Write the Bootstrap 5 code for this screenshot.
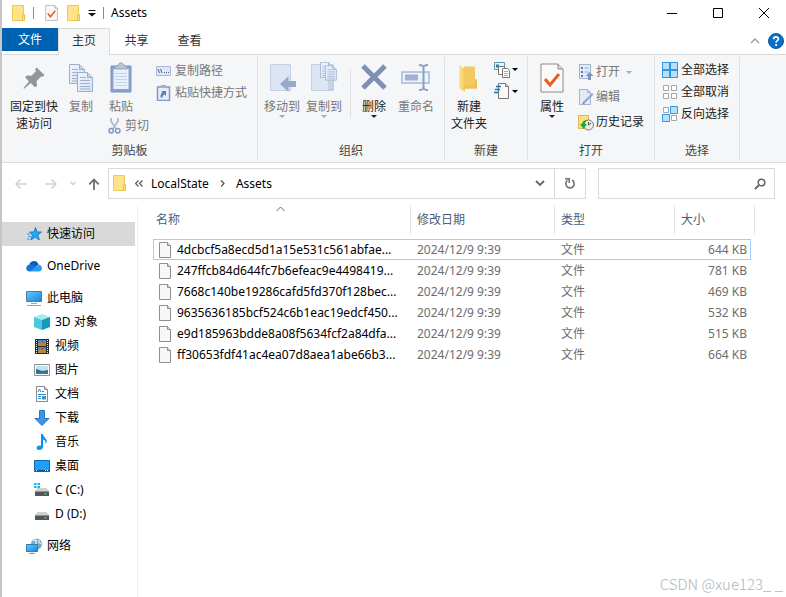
<!DOCTYPE html>
<html lang="zh-CN">
<head>
<meta charset="utf-8">
<meta name="viewport" content="width=device-width, initial-scale=1">
<title>Assets</title>
<link href="https://cdn.jsdelivr.net/npm/bootstrap@5.3.0/dist/css/bootstrap.min.css" rel="stylesheet">
<style>
  body { font: 12px/16px "Noto Sans", "Noto Sans CJK SC", sans-serif; color: #000; background: #fff; }
  svg { display: block; flex: none; }
  button { font: inherit; color: inherit; background: none; border: 0; padding: 0; }
  .window { border-left: 2px solid #c6c6c6; overflow: hidden; }
  .titlebar { height: 28px; padding-left: 10px; }
  .quick { height: 26px; gap: 7px; }
  .quick .after-split { margin-left: 4px; margin-right: 2px; }
  .quick h1 { font-size: 12px; }
  .titlebar .split { width: 1px; height: 12px; background: #8c8c8c; }
  .sys-btn { width: 46px; height: 26px; display: grid; place-items: center; }
  .tab-row { height: 27px; border-bottom: 1px solid #dadbdc; }
  .tab-row a { width: 53px; height: 27px; line-height: 26px; text-align: center; color: #333; text-decoration: none; }
  .tab-row a.file-tab { width: 56px; height: 23px; line-height: 24px; background: #0063b1; color: #fff; }
  .tab-row a.current { width: 52px; background: #f5f6f7; border: 1px solid #dadbdc; border-bottom: 0; line-height: 24px; }
  .tab-tools { padding-right: 2px; }
  .ribbon { background: #f5f6f7; border-bottom: 1px solid #dadbdc; height: 108px; padding: 2px 0; }
  .ribbon-group { border-right: 1px solid #e0e1e3; }
  .ribbon-group h2 { font-size: 12px; line-height: 16px; font-weight: 400; margin: 0 0 1px; text-align: center; color: #444; }
  .tools { padding: 1px 0 0 4px; }
  .g-clip { width: 256px; } .g-org { width: 187px; } .g-new { width: 83px; } .g-open { width: 127px; } .g-select { width: 85px; }
  .g-org .tools { padding-left: 3px; }
  .big { display: flex; flex-direction: column; align-items: center; width: 42px; padding-top: 3px; line-height: 17px; color: #222; white-space: nowrap; }
  .big.wide { width: 56px; }
  .big.slim { width: 38px; }
  .big svg { margin-bottom: 3px; }
  .big svg.caret { margin-bottom: 0; }
  .g-org .rule { border-left: 1px solid #e0e1e3; margin: 12px 2px 0 5px; }
  .g-new .big, .g-open .big { width: 40px; }
  .mini { display: flex; align-items: center; gap: 4px; height: 22px; color: #222; white-space: nowrap; }
  .mini.cut { padding-left: 8px; }
  .mini-col { display: flex; flex-direction: column; padding-top: 2px; margin-left: 7px; }
  .g-new .mini-col { padding-top: 0; margin-left: 5px; }
  .g-open .mini-col { padding-top: 3px; margin-left: 6px; gap: 3px; }
  .g-open .mini { gap: 2px; }
  .g-select .mini-col { padding-top: 1px; margin-left: 3px; }
  .g-select .mini { gap: 3px; }
  .ribbon button:disabled { color: #777; }
  .tiny { display: flex; align-items: center; gap: 2px; height: 22px; }
  .addr-row { height: 43px; padding: 5px 11px 7px 12px; }
  .nav-btns { gap: 12px; }
  .addr-box, .search-box { border: 1px solid #d9d9d9; height: 31px; }
  .addr-box .crumb-sep { margin: 0 10px 0 9px; }
  .search-box { width: 177px; margin-left: 12px; }
  .search-box input { border: 0; outline: 0; font: inherit; min-width: 0; padding: 0 6px; }
  .refresh { width: 31px; height: 29px; border-left: 1px solid #d9d9d9; display: grid; place-items: center; }
  .side { width: 136px; border-right: 1px solid #f0f0f0; padding: 16px 2px 20px 0; }
  .side ul { margin: 0 0 8px; padding: 0; list-style: none; }
  .side a { display: flex; align-items: center; gap: 5px; height: 24px; padding-left: 24px; color: #000; text-decoration: none; white-space: nowrap; }
  .side ul ul { margin: 0; }
  .side ul ul a { padding-left: 32px; }
  .side a.here { background: #d9d9d9; }
  .files { table-layout: fixed; width: 602px; border-collapse: separate; border-spacing: 0; margin-left: 15px; }
  .c-name { width: 258px; } .c-date { width: 144px; } .c-type { width: 120px; } .c-size { width: 76px; } .c-end { width: 4px; }
  .files th { height: 28px; font-weight: 400; color: #4c607a; border-right: 1px solid #e5e5e5; padding: 0 0 0 6px; position: relative; }
  .files th:first-child { padding-left: 3px; }
  .files th.open-end { border-right: 0; }
  .files th .sort { position: absolute; left: 50%; top: 0; margin-left: -6px; }
  .files thead::after { content: ""; display: block; height: 5px; }
  .files td { height: 21px; line-height: 19px; padding: 0 0 0 6px; color: #6d6d6d; white-space: nowrap; border: 1px solid transparent; border-width: 1px 0; }
  .files td.name-cell { border-left-width: 1px; padding-left: 5px; color: #000; }
  .file-name { gap: 6px; }
  .files td.size-cell { border-right-width: 1px; text-align: right; padding-right: 3px; }
  .files tr.focused td { border-color: #99d1ff; }
  .files tr.focused td.blank { border-color: transparent; }
  .stamp { position: absolute; right: 3px; bottom: 3px; font: 300 15px/20px "Noto Sans CJK SC", sans-serif; color: #b4b4b4; }
</style>
<script src="https://cdn.jsdelivr.net/npm/bootstrap@5.3.0/dist/js/bootstrap.bundle.min.js"></script>
</head>
<body>
<svg width="0" height="0" class="position-absolute" aria-hidden="true">
  <defs>
    <linearGradient id="gBlue" x1="0" y1="0" x2="1" y2="1"><stop offset="0" stop-color="#68c8f8"/><stop offset="1" stop-color="#1687e0"/></linearGradient>
    <linearGradient id="gPage" x1="0" y1="0" x2="1" y2="1"><stop offset="0" stop-color="#f0f5fc"/><stop offset="1" stop-color="#d5e1f2"/></linearGradient>
    <linearGradient id="gFold" x1="0" y1="0" x2="1" y2="0"><stop offset="0" stop-color="#ffe596"/><stop offset="1" stop-color="#f3c853"/></linearGradient>
    <symbol id="folder" viewBox="0 0 14 17"><path d="M.5.5h11v15H.5z" fill="#ffe38b" stroke="#eec955"/><path d="M10.500 9.500h2v6h-2z" fill="#ffe38b" stroke="#e6bf4a"/></symbol>
    <symbol id="checkdoc" viewBox="0 0 24 30"><path d="M1 1h17l5 5v23H1z" fill="#fafafa" stroke="#8b8b8b"/><path d="M18 1v5h5" fill="#ddd" stroke="#8b8b8b"/><path d="M5 16l5 6 9-11" fill="none" stroke="#ed5b20" stroke-width="3"/></symbol>
    <symbol id="page" viewBox="0 0 12 16"><path d="M.5.5h8l3 3v12H.5z" fill="#f7f7f7" stroke="#8f8f8f"/><path d="M8.500.5v3h3" fill="#ddd" stroke="#8f8f8f"/></symbol>
    <symbol id="lined" viewBox="0 0 16 20"><path d="M.5.5h10l5 5v14H.5z" fill="url(#gPage)" stroke="#9bb0d1"/><path d="M10.500.5v5h5" fill="#c4d2e8" stroke="#9bb0d1"/><path d="M3 5.500h6M3 8.500h10M3 11.500h10M3 14.500h10M3 17h10" stroke="#9fb2d0"/></symbol>
    <symbol id="caret" viewBox="0 0 6 3"><path d="M0 0h6L3 3z" fill="currentColor"/></symbol>
    <symbol id="drive" viewBox="0 0 14 8"><path d="M2.500 0h9L14 3H0z" fill="#cfd1d3"/><path d="M0 3h14v5H0z" fill="#515558"/><path d="M0 3h14v1H0z" fill="#8f9396"/><path d="M9.500 5h2v1.500h-2z" fill="#3ee05c"/></symbol>
  </defs>
</svg>

<div class="window min-vh-100 position-relative d-flex flex-column">
  <header class="titlebar d-flex align-items-start">
    <div class="quick d-flex align-items-center">
      <svg width="14" height="17"><use href="#folder"/></svg>
      <span class="split"></span>
      <button type="button" class="after-split" aria-label="属性"><svg width="13" height="16"><use href="#checkdoc"/></svg></button>
      <button type="button" aria-label="新建文件夹"><svg width="14" height="17"><use href="#folder"/></svg></button>
      <button type="button" aria-label="自定义快速访问工具栏"><svg width="8" height="7" viewBox="0 0 8 7"><path d="M.5.5h7" stroke="#111"/><path d="M0 3h8L4 6.500z" fill="#111"/></svg></button>
      <span class="split"></span>
      <h1 class="m-0 fw-normal">Assets</h1>
    </div>
    <div class="d-flex ms-auto">
      <button type="button" class="sys-btn" aria-label="最小化"><svg width="12" height="10" viewBox="0 0 12 10"><path d="M2 5.500h10" stroke="#000"/></svg></button>
      <button type="button" class="sys-btn" aria-label="最大化"><svg width="12" height="10" viewBox="0 0 12 10"><path d="M2.500.5h9v9h-9z" fill="none" stroke="#000"/></svg></button>
      <button type="button" class="sys-btn" aria-label="关闭"><svg width="12" height="10" viewBox="0 0 12 10"><path d="M2 0l10 10M12 0L2 10" stroke="#000"/></svg></button>
    </div>
  </header>

  <nav class="tab-row d-flex" aria-label="功能区">
    <a href="#" class="file-tab">文件</a>
    <a href="#" class="current">主页</a>
    <a href="#">共享</a>
    <a href="#">查看</a>
    <div class="tab-tools ms-auto d-flex align-items-center gap-2">
      <button type="button" aria-label="最小化功能区"><svg width="10" height="6" viewBox="0 0 10 6"><path d="M1 5l4-4 4 4" fill="none" stroke="#999" stroke-width="1.300"/></svg></button>
      <button type="button" aria-label="帮助"><svg width="16" height="16" viewBox="0 0 16 16"><circle cx="8" cy="8" r="7.500" fill="#0870c8" stroke="#075ba5"/><path d="M5.700 6.200c0-3.200 4.700-3 4.700-.3 0 1.800-2.300 1.800-2.300 3.800M8.100 11v2" fill="none" stroke="#fff" stroke-width="1.700"/></svg></button>
    </div>
  </nav>

  <section class="ribbon d-flex" aria-label="主页">
    <div class="ribbon-group g-clip d-flex flex-column justify-content-between">
      <div class="tools d-flex">
        <button type="button" class="big wide">
          <svg width="32" height="34" viewBox="0 0 32 34"><path d="M18.500 6.500l8 7.500-1.600 1.800-1.800-.3-4.500 4.600.4 4.900-2.200 1.200-4-4.200L6.500 27.500l-1 .2.300-1.300 5.200-6-3.800-4.100 1.600-1.900 4.700.4 4.500-4.700-.9-1.800z" fill="#8f979e"/></svg>
          <span>固定到快<br>速访问</span>
        </button>
        <button type="button" class="big slim" disabled>
          <svg width="26" height="34" viewBox="0 0 26 34"><use href="#lined" x="1" y="3" width="16" height="20"/><use href="#lined" x="9" y="11" width="16" height="20"/></svg>
          复制
        </button>
        <div class="d-flex flex-column">
          <button type="button" class="big wide-paste" disabled>
            <svg width="22" height="34" viewBox="0 0 22 34"><path d="M1 5h20v26H1z" fill="#8ba2c9" stroke="#7a93bd"/><path d="M3.500 8h15v20h-15z" fill="#eaf1fb"/><path d="M5 12.500h12M5 15.500h12M5 18.500h12M5 21.500h12M5 24.500h12" stroke="#c5d4ea"/><path d="M5 8V5h3c0-4 6-4 6 0h3v3z" fill="#b9c7db" stroke="#8fa3c4"/></svg>
            粘贴
          </button>
          <button type="button" class="mini cut" disabled>
            <svg width="13" height="16" viewBox="0 0 13 16"><path d="M3 0v3l5.500 8.500M10 0v3L4.500 11.500" stroke="#aebacd" stroke-width="1.800" fill="none"/><circle cx="3.200" cy="12.800" r="2.200" fill="none" stroke="#8399c0" stroke-width="1.500"/><circle cx="9.800" cy="12.800" r="2.200" fill="none" stroke="#8399c0" stroke-width="1.500"/></svg>
            剪切
          </button>
        </div>
        <div class="mini-col">
          <button type="button" class="mini" disabled>
            <svg width="15" height="10" viewBox="0 0 15 10"><path d="M.5.5h14v9H.5z" fill="#dde7f5" stroke="#a9bad6"/><path d="M2 3l1.500 4M4.500 3L6 7M8 6.500h1M10 6.500h1M12 6.500h1" stroke="#4e6590" fill="none"/></svg>
            复制路径
          </button>
          <button type="button" class="mini" disabled>
            <svg width="15" height="16" viewBox="0 0 15 16"><path d="M1.500 2h12v13.500h-12z" fill="#e4edf9" stroke="#8299c2" stroke-width="1.500"/><path d="M5 0h5v3H5z" fill="#a3b3cc"/><path d="M4.500 12.500c0-3 .5-4 2-5L5.200 6H10v5L8.500 9.500c-1.500.5-2 1.500-2 3z" fill="#5d7cb3"/></svg>
            粘贴快捷方式
          </button>
        </div>
      </div>
      <h2>剪贴板</h2>
    </div>

    <div class="ribbon-group g-org d-flex flex-column justify-content-between">
      <div class="tools d-flex">
        <button type="button" class="big" disabled>
          <svg width="28" height="34" viewBox="0 0 28 34"><path d="M2.500 3.500h20v26h-20z" fill="#dbe5f3" stroke="#c3d1e6"/><path d="M22 17h1v12h-1z" fill="#b6c7e0"/><path d="M12 23l8.500-8v5H28v6h-7.500v5z" fill="#98a9c8"/></svg>
          移动到
          <svg class="caret" width="6" height="3" color="#aaa"><use href="#caret"/></svg>
        </button>
        <button type="button" class="big" disabled>
          <svg width="28" height="34" viewBox="0 0 28 34"><path d="M1.500 3.500h22v26h-22z" fill="#dbe5f3" stroke="#c3d1e6"/><path d="M19 18h4v11h-4z" fill="#c9d7eb" stroke="#b6c7e0"/><use href="#lined" x="10" y="1" width="13" height="16"/><use href="#lined" x="15" y="4" width="12" height="16"/></svg>
          复制到
          <svg class="caret" width="6" height="3" color="#aaa"><use href="#caret"/></svg>
        </button>
        <div class="rule"></div>
        <button type="button" class="big">
          <svg width="28" height="34" viewBox="0 0 28 34"><path d="M3 5l22 22M25 5L3 27" stroke="#7e90b3" stroke-width="5"/></svg>
          删除
          <svg class="caret" width="6" height="3"><use href="#caret"/></svg>
        </button>
        <button type="button" class="big" disabled>
          <svg width="30" height="34" viewBox="0 0 30 34"><path d="M1 11h27v11H1z" fill="#edf3fb" stroke="#a8b9d6" stroke-width="1.500"/><path d="M4 13.500h13v6H4z" fill="#a0b1cf"/><path d="M18 4c4 0 4.500 1 4.500 3v19c0 2-.5 3-4.500 3M27 4c-4 0-4.500 1-4.500 3v19c0 2 .5 3 4.500 3" fill="none" stroke="#8d9fbe" stroke-width="2"/></svg>
          重命名
        </button>
      </div>
      <h2>组织</h2>
    </div>

    <div class="ribbon-group g-new d-flex flex-column justify-content-between">
      <div class="tools d-flex">
        <button type="button" class="big">
          <svg width="24" height="34" viewBox="0 0 24 34"><path d="M7 5.500h11v13h2v9H7z" fill="#f2ca61"/><path d="M2 4l6 4v23l-6-4z" fill="url(#gFold)"/><path d="M8 27.500h12v-9h-2v6H8z" fill="#edc04f"/></svg>
          <span>新建<br>文件夹</span>
        </button>
        <div class="mini-col">
          <button type="button" class="tiny" aria-label="新建项目"><svg width="16" height="17" viewBox="0 0 16 17"><path d="M.5 1.500h10v7H.5z" fill="#e9f4fa" stroke="#6494ad"/><path d="M2 3.500h3v3H2z" fill="#267fb0"/><path d="M4.500 5.500h6v8h-6z" fill="#fff" stroke="#777"/><path d="M8.500 7.500h5l2 2v7h-7z" fill="#fff" stroke="#777"/><path d="M10 10.500h4M10 12.500h4M10 14.500h4" stroke="#e39582"/></svg><svg class="caret" width="6" height="3"><use href="#caret"/></svg></button>
          <button type="button" class="tiny" aria-label="轻松访问"><svg width="16" height="17" viewBox="0 0 16 17"><path d="M4.500.5h7l3 3v12h-10z" fill="#fafafa" stroke="#777"/><path d="M11.500.5v3h3" fill="#ddd" stroke="#777"/><path d="M2 3.500h5M1 6.500h5M0 9.500h4" stroke="#1374bb" stroke-width="1.300"/></svg><svg class="caret" width="6" height="3"><use href="#caret"/></svg></button>
        </div>
      </div>
      <h2>新建</h2>
    </div>

    <div class="ribbon-group g-open d-flex flex-column justify-content-between">
      <div class="tools d-flex">
        <button type="button" class="big">
          <svg width="24" height="34" viewBox="0 0 24 34"><use href="#checkdoc" y="2" width="24" height="30"/></svg>
          属性
          <svg class="caret" width="6" height="3"><use href="#caret"/></svg>
        </button>
        <div class="mini-col">
          <button type="button" class="mini" disabled><svg width="16" height="16" viewBox="0 0 16 16"><path d="M1.500.5h11v14h-11z" fill="#e2ebf7" stroke="#a4b4cf"/><path d="M3 3h2v2H3zM3 7h2v2H3zM3 11h2v2H3z" fill="#5e7bb0"/><path d="M6.500 4h4M6.500 8h4" stroke="#9cafcf"/><path d="M11.500 8l4 4H13v4h-3v-4H7.500z" fill="#7f95bb"/></svg>打开<svg class="caret ms-1" width="6" height="3" color="#aaa"><use href="#caret"/></svg></button>
          <button type="button" class="mini" disabled><svg width="16" height="16" viewBox="0 0 16 16"><path d="M1.500.5h8l3 3v12h-11z" fill="#e2ebf7" stroke="#a4b4cf"/><path d="M9.500.5v3h3" fill="none" stroke="#a4b4cf"/><path d="M5 13l9-9 1.500 1.500-9 9z" fill="#93a6c7"/><path d="M4.500 15l.8-2.300 1.600 1.600z" fill="#526d9e"/></svg>编辑</button>
          <button type="button" class="mini"><svg width="16" height="17" viewBox="0 0 16 17"><path d="M.5 1.500h10v13H.5z" fill="#ffe07b" stroke="#dfb950"/><circle cx="10.500" cy="11" r="5" fill="#e9eceb" stroke="#7b7f80"/><path d="M10.500 11l2.500-2M10.500 8v3" stroke="#555"/><path d="M2 10h2c.5-3 3-4.500 6-4-2 1-3 2-3 4h2l-3.500 5z" fill="#27a338"/></svg>历史记录</button>
        </div>
      </div>
      <h2>打开</h2>
    </div>

    <div class="ribbon-group g-select d-flex flex-column justify-content-between">
      <div class="tools d-flex">
        <div class="mini-col">
          <button type="button" class="mini"><svg width="16" height="16" viewBox="0 0 16 16"><path d="M0 0h16v16H0z" fill="#3396e0"/><path d="M1 1h6v6H1zM9 1h6v6H9zM1 9h6v6H1zM9 9h6v6H9z" fill="#b5e1ff"/></svg>全部选择</button>
          <button type="button" class="mini"><svg width="16" height="16" viewBox="0 0 16 16"><path d="M1.500 1.500h5v5h-5zM9.500 1.500h5v5h-5zM1.500 9.500h5v5h-5zM9.500 9.500h5v5h-5z" fill="#fdfdfd" stroke="#a8a8a8"/></svg>全部取消</button>
          <button type="button" class="mini"><svg width="16" height="16" viewBox="0 0 16 16"><path d="M1.500 1.500h5v5h-5zM9.500 9.500h5v5h-5z" fill="#fdfdfd" stroke="#a8a8a8"/><path d="M8.500.5h7v7h-7zM.5 8.500h7v7h-7z" fill="#b5e1ff" stroke="#3396e0"/></svg>反向选择</button>
        </div>
      </div>
      <h2>选择</h2>
    </div>
  </section>

  <div class="addr-row d-flex align-items-center">
    <div class="nav-btns d-flex align-items-center me-2">
      <button type="button" aria-label="后退"><svg width="14" height="12" viewBox="0 0 14 12"><path d="M13 6H2M6.500 1.500L2 6l4.500 4.500" fill="none" stroke="#d4d4d4" stroke-width="1.600"/></svg></button>
      <button type="button" class="ms-1" aria-label="前进"><svg width="14" height="12" viewBox="0 0 14 12"><path d="M1 6h11M7.500 1.500L12 6l-4.500 4.500" fill="none" stroke="#d4d4d4" stroke-width="1.600"/></svg></button>
      <button type="button" aria-label="最近位置"><svg width="6" height="5" viewBox="0 0 6 5"><path d="M.5 1L3 3.500 5.500 1" fill="none" stroke="#ccc" stroke-width="1.300"/></svg></button>
      <button type="button" aria-label="向上"><svg width="12" height="12" viewBox="0 0 12 12"><path d="M6 12V2M1.200 6.300L6 1.500l4.800 4.800" fill="none" stroke="#707070" stroke-width="1.800"/></svg></button>
    </div>
    <div class="addr-box d-flex align-items-center flex-grow-1">
      <svg class="ms-1" width="14" height="17"><use href="#folder"/></svg>
      <svg class="ms-2" width="8" height="7" viewBox="0 0 8 7"><path d="M3.500.5l-3 3 3 3M7.500.5l-3 3 3 3" fill="none" stroke="#555" stroke-width="1.200"/></svg>
      <a href="#" class="ms-2 text-black text-decoration-none">LocalState</a>
      <svg class="crumb-sep" width="8" height="7" viewBox="0 0 8 7"><path d="M3 .5l3 3-3 3" fill="none" stroke="#555" stroke-width="1.300"/></svg>
      <a href="#" class="text-black text-decoration-none">Assets</a>
      <button type="button" class="ms-auto me-2" aria-label="展开"><svg width="12" height="7" viewBox="0 0 12 7"><path d="M2 1l4 4 4-4" fill="none" stroke="#666" stroke-width="1.800"/></svg></button>
      <button type="button" class="refresh" aria-label="刷新"><svg width="12" height="12" viewBox="0 0 12 12"><path d="M3.500 2.300a4.200 4.200 0 1 0 4.500-.3" fill="none" stroke="#707070" stroke-width="1.600"/><path d="M1 .8h4.200V5" fill="none" stroke="#707070" stroke-width="1.500"/></svg></button>
    </div>
    <div class="search-box d-flex align-items-center" role="search">
      <input type="search" class="flex-grow-1" aria-label="搜索">
      <button type="button" class="pe-2" aria-label="开始搜索"><svg width="12" height="12" viewBox="0 0 12 12"><circle cx="7.500" cy="4.500" r="3.300" fill="none" stroke="#666" stroke-width="1.500"/><path d="M5.200 6.900L1 11" stroke="#666" stroke-width="2"/></svg></button>
    </div>
  </div>

  <main class="d-flex flex-grow-1">
    <nav class="side flex-shrink-0" aria-label="导航窗格">
      <ul><li><a href="#" class="here"><svg width="16" height="16" viewBox="0 0 16 16"><path d="M9.500 1.500L11 6h4.500l-3.700 3 1.500 5-4.100-2.800L4.800 14l1.700-4.800L3.700 6H8z" fill="#2fa5ec" stroke="#1583cc"/><path d="M1 8h3M2 10.500h3M1 13h2.500" stroke="#3499d9"/></svg>快速访问</a></li></ul>
      <ul><li><a href="#"><svg width="16" height="16" viewBox="0 0 16 16"><path d="M3.200 6.500C4.500 2 11 1.500 12.500 6.500L8 10z" fill="#0c5bb5"/><path d="M4 13.500C-1 13.500-1 7 4 6.500c2-.3 4 .7 8 3.500z" fill="#1474d4"/><path d="M4 13.500l8.500-7c4.500.3 4.500 7 .5 7z" fill="#2b9df0"/></svg>OneDrive</a></li></ul>
      <ul>
        <li><a href="#"><svg width="16" height="16" viewBox="0 0 16 16"><path d="M.5 1.500h15v10H.5z" fill="url(#gBlue)" stroke="#4c7f9e"/><path d="M5 13.500h6M1 15.500h14" stroke="#9ba8b2"/></svg>此电脑</a>
          <ul>
            <li><a href="#"><svg width="16" height="16" viewBox="0 0 16 16"><path d="M0 3l8-3 8 3-8 3z" fill="#9cecf2"/><path d="M0 3l8 3v10l-8-3z" fill="#4cc6dc"/><path d="M16 3L8 6v10l8-3z" fill="#149ab8"/></svg>3D 对象</a></li>
            <li><a href="#"><svg width="16" height="16" viewBox="0 0 16 16"><path d="M1 1h14v15H1z" fill="#2b2b2b"/><path d="M2.500 2v13M13.500 2v13" stroke="#eee" stroke-dasharray="1 1"/><path d="M4 2h8v6H4zM4 9h8v6H4z" fill="#398adb"/><path d="M4 6l3-2 2 1 3-2v5H4zM4 13l3-3 5 2v3H4z" fill="#b78a31"/><path d="M8 3h2v2H8zM7 10h2v2H7z" fill="#df3e32"/></svg>视频</a></li>
            <li><a href="#"><svg width="16" height="16" viewBox="0 0 16 16"><path d="M.5 2.500h15v11H.5z" fill="#fff" stroke="#919191"/><path d="M2 4h12v8H2z" fill="#bfe2f5"/><path d="M2 7c3 1 4 1 6 2l6-1v4H2z" fill="#3c6e79"/><path d="M2 10.500h12V12H2z" fill="#2e78b5"/></svg>图片</a></li>
            <li><a href="#"><svg width="16" height="16" viewBox="0 0 16 16"><path d="M2.500.5h8l3 3v12h-11z" fill="#fff" stroke="#888"/><path d="M10.500.5v3h3" fill="#ddd" stroke="#888"/><path d="M4 6l1.500-3L7 6M8 5.500h2M4 8.500h8M4 10.500h3M4 12.500h3" fill="none" stroke="#2b88c8"/><path d="M8 10h4v3.500H8z" fill="#4f8fb5"/></svg>文档</a></li>
            <li><a href="#"><svg width="16" height="16" viewBox="0 0 16 16"><path d="M5.500.5h5v8H15l-7 7-7-7h4.500z" fill="#3c96e6" stroke="#2478c2"/></svg>下载</a></li>
            <li><a href="#"><svg width="16" height="16" viewBox="0 0 16 16"><path d="M7 0h2c0 3 4 4.500 3.800 7.500-.1 1.200-.7 2-1.300 2.500.6-2.500-.5-4-2.500-4.500V13c0 3.500-6.500 4-6.500 1 0-2 2.500-3 4.500-2.300z" fill="#0a93ee"/></svg>音乐</a></li>
            <li><a href="#"><svg width="16" height="16" viewBox="0 0 16 16"><path d="M.5 2.500h15v11H.5z" fill="#1ca0fb" stroke="#0b67aa"/><path d="M1 12.500h14" stroke="#084e86"/><path d="M2 12.500h1M11 12.500h1M13 12.500h1" stroke="#fff"/></svg>桌面</a></li>
            <li><a href="#"><svg width="16" height="16" viewBox="0 0 16 16"><path d="M0 1h2.500v2H0zM3.500 1H6v2H3.500zM0 4h2.500v2H0zM3.500 4H6v2H3.500z" fill="#13b5ea"/><use href="#drive" x="1" y="6" width="14" height="8"/></svg>C (C:)</a></li>
            <li><a href="#"><svg width="16" height="16" viewBox="0 0 16 16"><use href="#drive" x="1" y="6" width="14" height="8"/></svg>D (D:)</a></li>
          </ul>
        </li>
      </ul>
      <ul><li><a href="#"><svg width="16" height="16" viewBox="0 0 16 16"><circle cx="10.500" cy="6" r="5.500" fill="#76a9c5"/><path d="M7 3c2-2 4-1 3 1s2 2 1 4M13 2c-1 2 1 3 2 4" stroke="#d5eaf3" stroke-width="1.500" fill="none"/><path d="M.5 6.500h11v7H.5z" fill="url(#gBlue)" stroke="#2d7db3"/><path d="M6 13.500V15M3 15.500h6" stroke="#8b9aa5"/></svg>网络</a></li></ul>
    </nav>

    <section class="flex-grow-1 overflow-hidden" aria-label="文件">
      <table class="files">
        <colgroup><col class="c-name"><col class="c-date"><col class="c-type"><col class="c-size"><col class="c-end"></colgroup>
        <thead>
          <tr>
            <th scope="col" aria-sort="ascending"><svg class="sort" width="9" height="6" viewBox="0 0 9 6"><path d="M.5 5l4-4 4 4" fill="none" stroke="#666"/></svg>名称</th>
            <th scope="col">修改日期</th><th scope="col">类型</th><th scope="col" class="open-end">大小</th><th></th>
          </tr>
        </thead>
        <tbody>
          <tr class="focused"><td class="name-cell"><div class="file-name d-flex align-items-center"><svg width="12" height="16"><use href="#page"/></svg><span>4dcbcf5a8ecd5d1a15e531c561abfae...</span></div></td><td>2024/12/9 9:39</td><td>文件</td><td class="size-cell">644 KB</td><td class="blank"></td></tr>
          <tr><td class="name-cell"><div class="file-name d-flex align-items-center"><svg width="12" height="16"><use href="#page"/></svg><span>247ffcb84d644fc7b6efeac9e4498419...</span></div></td><td>2024/12/9 9:39</td><td>文件</td><td class="size-cell">781 KB</td><td></td></tr>
          <tr><td class="name-cell"><div class="file-name d-flex align-items-center"><svg width="12" height="16"><use href="#page"/></svg><span>7668c140be19286cafd5fd370f128bec...</span></div></td><td>2024/12/9 9:39</td><td>文件</td><td class="size-cell">469 KB</td><td></td></tr>
          <tr><td class="name-cell"><div class="file-name d-flex align-items-center"><svg width="12" height="16"><use href="#page"/></svg><span>9635636185bcf524c6b1eac19edcf450...</span></div></td><td>2024/12/9 9:39</td><td>文件</td><td class="size-cell">532 KB</td><td></td></tr>
          <tr><td class="name-cell"><div class="file-name d-flex align-items-center"><svg width="12" height="16"><use href="#page"/></svg><span>e9d185963bdde8a08f5634fcf2a84dfa...</span></div></td><td>2024/12/9 9:39</td><td>文件</td><td class="size-cell">515 KB</td><td></td></tr>
          <tr><td class="name-cell"><div class="file-name d-flex align-items-center"><svg width="12" height="16"><use href="#page"/></svg><span>ff30653fdf41ac4ea07d8aea1abe66b3...</span></div></td><td>2024/12/9 9:39</td><td>文件</td><td class="size-cell">664 KB</td><td></td></tr>
        </tbody>
      </table>
    </section>
  </main>
  <div class="stamp">CSDN @xue123_ _</div>
</div>
</body>
</html>
